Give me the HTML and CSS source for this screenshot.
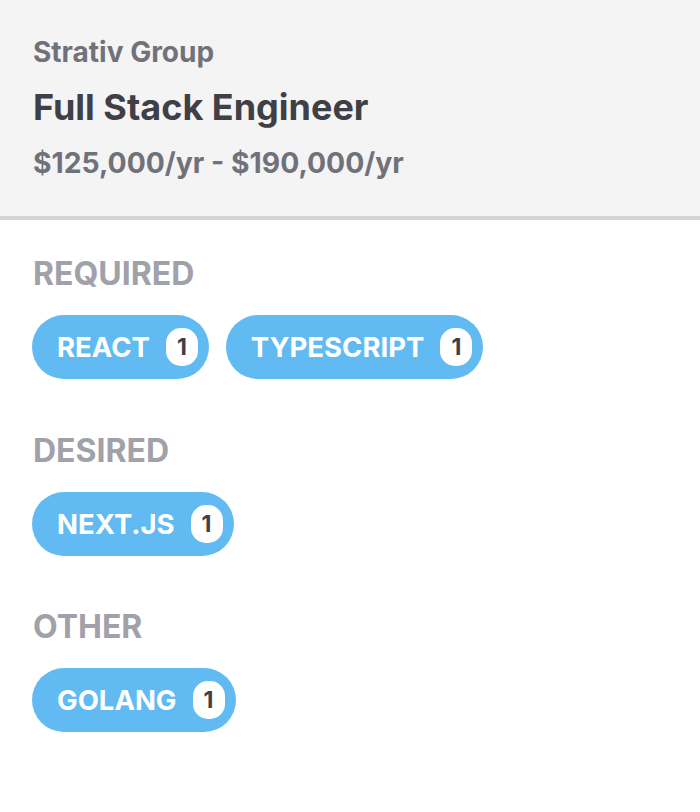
FILE: index.html
```html
<!DOCTYPE html>
<html lang="en">
<head>
<meta charset="utf-8">
<title>Full Stack Engineer</title>
<link rel="stylesheet" href="styles.css">
</head>
<body>
<div class="card">
  <header class="job-header">
    <div class="company">Strativ Group</div>
    <h1 class="title">Full Stack Engineer</h1>
    <div class="salary">$125,000/yr - $190,000/yr</div>
  </header>
  <main class="skills">
    <section class="group">
      <h2 class="group-label">REQUIRED</h2>
      <div class="pills">
        <span class="pill"><span class="pill-name">REACT</span><span class="count">1</span></span>
        <span class="pill"><span class="pill-name">TYPESCRIPT</span><span class="count">1</span></span>
      </div>
    </section>
    <section class="group">
      <h2 class="group-label">DESIRED</h2>
      <div class="pills">
        <span class="pill"><span class="pill-name">NEXT.JS</span><span class="count">1</span></span>
      </div>
    </section>
    <section class="group">
      <h2 class="group-label">OTHER</h2>
      <div class="pills">
        <span class="pill"><span class="pill-name">GOLANG</span><span class="count">1</span></span>
      </div>
    </section>
  </main>
</div>
</body>
</html>
```
FILE: styles.css
```css
* { box-sizing: border-box; }
html, body {
  margin: 0;
  padding: 0;
  background: #ffffff;
  font-family: Inter, "Noto Sans", "Liberation Sans", sans-serif;
}
.job-header {
  background: #f4f4f5;
  border-bottom: 4px solid #d4d4d8;
  padding: 36px 33px 36px;
}
.company {
  font-size: 28px;
  line-height: 32px;
  font-weight: 700;
  color: #71717a;
}
.title {
  margin: 17px 0 0;
  font-size: 36px;
  line-height: 44px;
  font-weight: 700;
  color: #3f3f46;
}
.salary {
  margin-top: 17px;
  font-size: 28.3px;
  line-height: 34px;
  font-weight: 700;
  color: #71717a;
}
.skills {
  padding: 35px 32px 0;
  display: flex;
  flex-direction: column;
  gap: 52.5px;
}
.group-label {
  margin: 0 0 22px 1px;
  font-size: 32px;
  line-height: 38px;
  font-weight: 700;
  color: #a1a1aa;
}
.pills {
  display: flex;
  flex-wrap: wrap;
  gap: 17px;
}
.pill {
  display: inline-flex;
  align-items: center;
  height: 64px;
  padding: 0 11px 0 25px;
  border-radius: 32px;
  background: #61bbf2;
  color: #ffffff;
  font-size: 27.5px;
  line-height: 32px;
  font-weight: 700;
}
.count {
  margin-left: 16px;
  width: 32px;
  height: 38px;
  border-radius: 15px;
  background: #ffffff;
  color: #3f3f46;
  font-size: 23px;
  font-weight: 700;
  display: flex;
  align-items: center;
  justify-content: center;
}
```
